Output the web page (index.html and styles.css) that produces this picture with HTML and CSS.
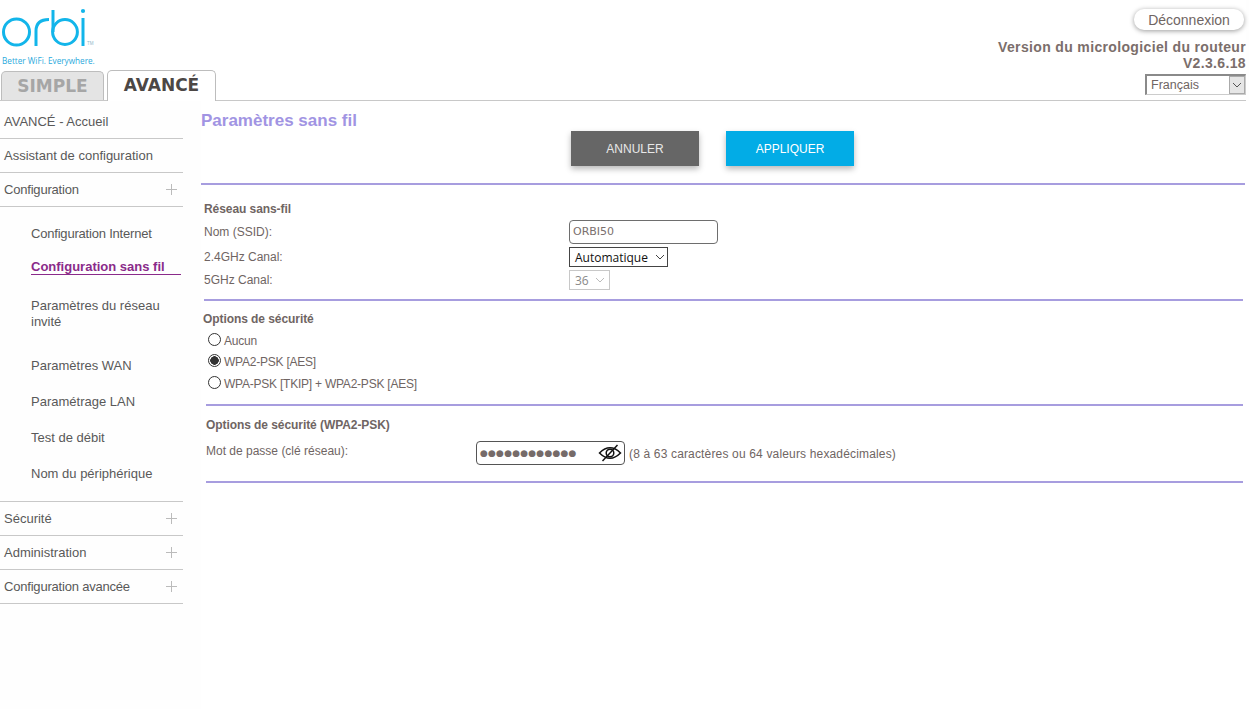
FILE: index.html
```html
<!DOCTYPE html>
<html lang="fr">
<head>
<meta charset="utf-8">
<title>Paramètres sans fil</title>
<link rel="stylesheet" href="styles.css">
</head>
<body>
<header class="header">
  <div class="brand">
    <svg class="logo" width="96" height="50" viewBox="1 7 96 50" aria-label="orbi">
      <g fill="none" stroke="#12b5ea" stroke-width="3">
        <circle cx="16.5" cy="32" r="13"/>
        <path d="M36 46V31Q36 19.5 49 19.5"/>
        <path d="M53 10V32"/>
        <circle cx="65" cy="32" r="12.4"/>
        <path d="M83 18V46"/>
      </g>
      <circle cx="83" cy="11" r="2.1" fill="#12b5ea"/>
      <text x="87" y="45" class="tm">TM</text>
    </svg>
    <div class="tagline">Better WiFi. Everywhere.</div>
    <nav class="tabs">
      <div class="tab tab-off">SIMPLE</div>
      <div class="tab tab-on">AVANCÉ</div>
    </nav>
  </div>
  <div class="head-right">
    <button class="logout">Déconnexion</button>
    <div class="fw">Version du micrologiciel du routeur<br>V2.3.6.18</div>
    <div class="lang"><span>Français</span><i class="lang-arrow"><svg width="10" height="6" viewBox="0 0 10 6"><path d="M1 1l4 4 4-4" fill="none" stroke="#555" stroke-width="1"/></svg></i></div>
  </div>
</header>
<div class="page">
  <aside class="side">
    <div class="item">AVANCÉ - Accueil</div>
    <div class="item">Assistant de configuration</div>
    <div class="item tight">Configuration<b class="plus"></b></div>
    <div class="sub">
      <a class="sublink s1 tight">Configuration Internet</a>
      <a class="sublink s2 active">Configuration sans fil</a>
      <a class="sublink s3">Paramètres du réseau invité</a>
      <a class="sublink s4">Paramètres WAN</a>
      <a class="sublink s4">Paramétrage LAN</a>
      <a class="sublink s4">Test de débit</a>
      <a class="sublink s4">Nom du périphérique</a>
    </div>
    <div class="item item-top">Sécurité<b class="plus"></b></div>
    <div class="item">Administration<b class="plus"></b></div>
    <div class="item tight">Configuration avancée<b class="plus"></b></div>
  </aside>
  <main class="main">
    <h1 class="title">Paramètres sans fil</h1>
    <div class="actions">
      <button class="btn btn-grey">ANNULER</button>
      <button class="btn btn-blue">APPLIQUER</button>
    </div>
    <hr class="rule rule-full">
    <section class="net">
      <h2 class="h">Réseau sans-fil</h2>
      <div class="row r-ssid"><label>Nom (SSID):</label><div class="field">ORBI50</div></div>
      <div class="row r-24"><label>2.4GHz Canal:</label><div class="sel">Automatique<svg width="10" height="6" viewBox="0 0 10 6"><path d="M1 1l4 4 4-4" fill="none" stroke="#444"/></svg></div></div>
      <div class="row r-5"><label>5GHz Canal:</label><div class="sel sel-off">36<svg width="10" height="6" viewBox="0 0 10 6"><path d="M1 1l4 4 4-4" fill="none" stroke="#bbb"/></svg></div></div>
    </section>
    <hr class="rule rule-a">
    <section class="sec">
      <h2 class="h">Options de sécurité</h2>
      <div class="radio"><i class="dot"></i>Aucun</div>
      <div class="radio"><i class="dot on"></i>WPA2-PSK [AES]</div>
      <div class="radio radio-last"><i class="dot"></i>WPA-PSK [TKIP] + WPA2-PSK [AES]</div>
    </section>
    <hr class="rule rule-b">
    <section class="psk">
      <h2 class="h">Options de sécurité (WPA2-PSK)</h2>
      <div class="pw-row">
        <label>Mot de passe (clé réseau):</label>
        <div class="pw">
          <span class="dots">●●●●●●●●●●●●</span>
          <svg width="24" height="18" viewBox="0 0 24 18"><path d="M1.5 9Q12 -1.5 22.5 9Q12 19.5 1.5 9Z" fill="none" stroke="#111" stroke-width="1.5"/><circle cx="12" cy="9" r="3.8" fill="none" stroke="#111" stroke-width="1.5"/><path d="M4.5 17L19.5 1" stroke="#111" stroke-width="1.5"/></svg>
        </div>
        <span class="hint">(8 à 63 caractères ou 64 valeurs hexadécimales)</span>
      </div>
    </section>
    <hr class="rule rule-b">
  </main>
</div>
</body>
</html>
```

FILE: styles.css
```css
* { box-sizing: border-box; }
html, body { margin: 0; padding: 0; }
body { width: 1249px; height: 709px; overflow: hidden; background: #fefefe; font-family: "Liberation Sans", Arial, sans-serif; font-size: 12px; color: #6f6563; }

.header { height: 101px; display: flex; justify-content: space-between; border-bottom: 1px solid #c8c8c8; margin-right: 3px; background: #fff; }
.brand { display: flex; flex-direction: column; padding-left: 1px; }
.logo { display: block; margin-top: 7px; }
.tm { font-size: 4.5px; fill: #8fb8c8; font-family: "Liberation Sans", sans-serif; }
.tagline { color: #2aa9dc; font-family: "Open Sans", sans-serif; font-size: 8.2px; line-height: 10px; margin-top: -1px; margin-left: 1px; height: 14px; white-space: nowrap; }
.tabs { display: flex; gap: 3px; align-items: flex-end; margin-top: 0; }
.tab { height: 30px; border: 1px solid #bdbdbd; border-bottom: 0; border-radius: 5px 5px 0 0; font-family: "DejaVu Sans", Verdana, sans-serif; font-weight: bold; font-size: 17px; text-align: center; line-height: 29px; }
.tab-off { width: 103px; background: #e4e4e4; color: #a6a6a6; height: 29px; }
.tab-on { width: 109px; height: 31px; background: #fff; color: #4c4745; margin-bottom: -1px; position: relative; }

.head-right { display: flex; flex-direction: column; align-items: flex-end; }
.logout { margin-top: 9px; margin-right: 2px; width: 110px; height: 21px; border: 0; border-radius: 10px; background: #fff; box-shadow: 0 1px 5px rgba(0,0,0,.4); color: #6f6563; font: 14px "Liberation Sans", sans-serif; padding: 0; }
.fw { margin-top: 9px; text-align: right; font-weight: bold; font-size: 14px; line-height: 16px; letter-spacing: .35px; color: #7b6e6b; }
.lang { margin-top: 3px; width: 101px; height: 21px; display: flex; border: 2px solid #8a8a8a; border-right: 1px solid #ccc; border-bottom: 1px solid #ccc; font-size: 12.5px; line-height: 19px; padding-left: 4px; justify-content: space-between; color: #6f6563; }
.lang-arrow { width: 16px; background: #e6e6e6; display: flex; align-items: center; justify-content: center; border: 1px solid #aaa; }

.page { display: flex; height: 608px; }
.side { width: 183px; flex: none; font-size: 13px; margin-top: 4px; color: #555; }
.item { height: 34px; line-height: 33px; padding-left: 4px; border-bottom: 1px solid #c8c8c8; display: flex; justify-content: space-between; align-items: center; padding-right: 6px; color: #595959; }
.tight { letter-spacing: -.2px; }
.item-top { border-top: 1px solid #c8c8c8; height: 35px; }
.plus { position: relative; width: 11px; height: 11px; display: block; background: linear-gradient(#bbb,#bbb) center/11px 1px no-repeat, linear-gradient(#bbb,#bbb) center/1px 11px no-repeat; }
.sub { padding-left: 31px; height: 294px; padding-top: 10px; padding-right: 2px; }
.sublink { display: block; line-height: 16px; color: #595959; }
.s1 { height: 33px; padding-top: 9px; }
.s2 { height: 25px; padding-top: 9px; border-bottom: 1px solid #8a2a8a; font-weight: bold; color: #8a2a8a; }
.s3 { margin-top: 23px; height: 60px; padding-right: 15px; }
.s4 { height: 36px; }

.main { flex: 1; margin-left: 18px; background: #fff; padding-right: 4px; }
.title { margin: 10px 0 0; font-size: 17px; line-height: 20px; color: #a194e3; font-weight: bold; height: 20px; }
.actions { display: flex; gap: 27px; padding-left: 370px; }
.btn { width: 128px; height: 35px; border: 0; color: #fff; font: 12px "Liberation Sans", sans-serif; box-shadow: 0 3px 6px rgba(0,0,0,.28); padding: 0; }
.btn-grey { background: #666; color: #e8e8e8; }
.btn-blue { background: #02ace6; }
.rule { height: 2px; border: 0; margin: 0; background: #a79ddf; }
.rule-full { margin-top: 17px; }
.rule-a { margin-left: 3px; margin-right: 2px; }
.rule-b { margin-left: 5px; margin-right: 2px; }

.h { margin: 0; font-size: 12px; font-weight: bold; color: #6f6563; line-height: 14px; letter-spacing: -.07px; }
.net { padding: 17px 0 0 3px; height: 114px; }
.row { display: flex; align-items: center; }
.row label { width: 365px; flex: none; }
.r-ssid { margin-top: 4px; height: 24px; }
.r-24 { height: 24px; margin-top: 1px; }
.r-5 { height: 22px; margin-top: 0; }
.field { width: 149px; height: 24px; border: 1px solid #6e6e6e; border-radius: 4px; padding-left: 3px; line-height: 22px; font-family: "DejaVu Sans", Tahoma, sans-serif; font-size: 11px; color: #7a706e; }
.sel { height: 20px; border: 1px solid #444; width: 99px; display: flex; justify-content: space-between; align-items: center; padding: 0 2px 0 5px; color: #111; font-size: 12px; font-family: "Open Sans", sans-serif; }
.sel-off { width: 41px; border-color: #c8c8c8; color: #888; padding-right: 4px; }
.sec { padding: 11px 0 0 2px; height: 103px; }
.radio { display: flex; align-items: center; height: 21px; padding-left: 5px; letter-spacing: -.23px; }
.radio-last { margin-top: 1px; }
.sec .h { margin-bottom: 4px; }
.dot { width: 13px; height: 13px; border: 1.5px solid #333; border-radius: 50%; margin-right: 3px; flex: none; margin-top: -3px; background: #fff; }
.dot.on { background: radial-gradient(circle, #333 0 4px, #fff 4.5px); }
.psk { padding: 12px 0 0 5px; height: 75px; }
.pw-row { display: flex; align-items: center; margin-top: 9px; }
.pw-row label { width: 270px; flex: none; margin-top: -4px; }
.pw { width: 149px; height: 24px; border: 1px solid #555; border-radius: 4px; display: flex; align-items: center; justify-content: space-between; padding: 0 2px 0 3px; flex: none; }
.dots { font-size: 9px; letter-spacing: .2px; color: #766b69; font-family: "DejaVu Sans", sans-serif; }
.hint { margin-left: 4px; margin-top: 1px; letter-spacing: .16px; }
```
